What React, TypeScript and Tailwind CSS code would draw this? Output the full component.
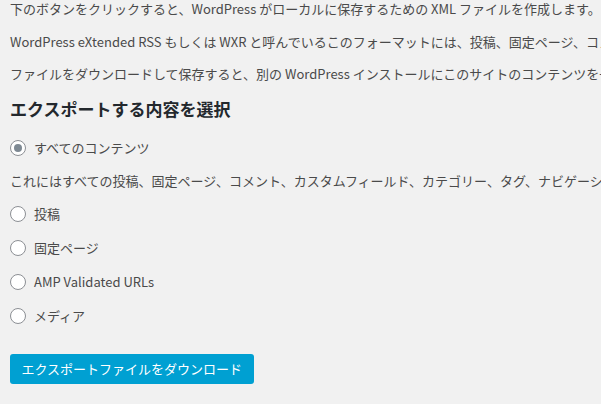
import React, { useState } from 'react'

const FONT = "font-['Segoe_UI','Noto_Sans_CJK_JP',sans-serif]"

const options = [
    { key: 'all', label: 'すべてのコンテンツ' },
    { key: 'posts', label: '投稿' },
    { key: 'pages', label: '固定ページ' },
    { key: 'amp', label: 'AMP Validated URLs' },
    { key: 'media', label: 'メディア' },
]

const Radio = ({ checked, onClick, label }: { checked: boolean; onClick: () => void; label: string }) => (
    <label className="flex items-center gap-[8px] h-[34px] cursor-pointer" onClick={onClick}>
        <span className="w-[16px] h-[16px] rounded-full border border-[#8c8f94] bg-white flex items-center justify-center shrink-0">
            {checked && <span className="w-[8px] h-[8px] rounded-full bg-[#7e8993]" />}
        </span>
        <span>{label}</span>
    </label>
)

const App = () => {
    const [selected, setSelected] = useState('all')

    return (
        <div className={`w-[601px] h-[404px] overflow-hidden bg-[#f1f1f1] text-[#4a4a4a] text-[13px] leading-[19.5px] ${FONT}`}>
            <div className="pl-[10px] whitespace-nowrap -mt-[1px]">
                <p className="mb-[13px]">下のボタンをクリックすると、WordPress がローカルに保存するための XML ファイルを作成します。</p>
                <p className="mb-[13px]">WordPress eXtended RSS もしくは WXR と呼んでいるこのフォーマットには、投稿、固定ページ、コメント、カスタムフィールド、カテゴリー、タグが含まれます。</p>
                <p className="mb-[13px]">ファイルをダウンロードして保存すると、別の WordPress インストールにこのサイトのコンテンツを一括インポートできます。</p>

                <h2 className="text-[17px] font-bold text-[#23282d] leading-[24px] mb-[10px]">エクスポートする内容を選択</h2>

                {/* すべてのコンテンツ */}
                <Radio checked={selected === 'all'} onClick={() => setSelected('all')} label={options[0].label} />
                <p className="h-[32px] leading-[32px]">
                    これにはすべての投稿、固定ページ、コメント、カスタムフィールド、カテゴリー、タグ、ナビゲーションメニュー、カスタム投稿が含まれます。
                </p>

                {options.slice(1).map((item) => (
                    <Radio key={item.key} checked={selected === item.key} onClick={() => setSelected(item.key)} label={item.label} />
                ))}

                <button className="mt-[21px] h-[30px] px-[11.5px] rounded-[3px] bg-[#00a0d2] text-white text-[13px] leading-[28px]">
                    エクスポートファイルをダウンロード
                </button>
            </div>
        </div>
    )
}

export default App
